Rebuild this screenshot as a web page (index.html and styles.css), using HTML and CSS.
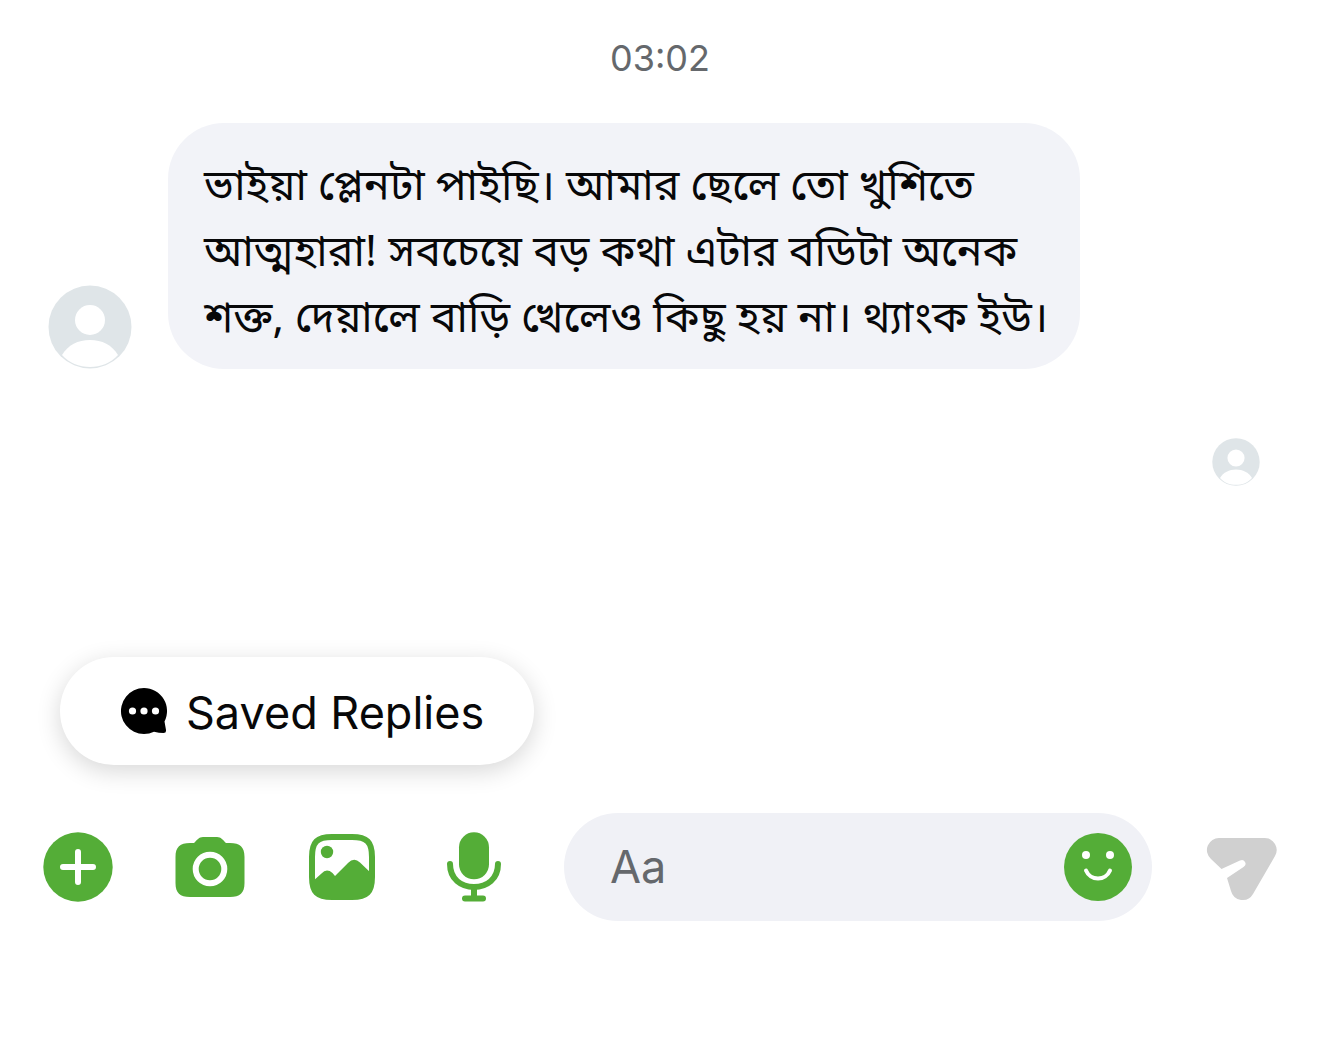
FILE: index.html
```html
<!DOCTYPE html>
<html lang="bn">
<head>
<meta charset="utf-8">
<meta name="viewport" content="width=device-width, initial-scale=1">
<title>Messages</title>
<link rel="stylesheet" href="styles.css">
</head>
<body>
<div class="chat">
  <main class="thread">
    <time class="thread-time" datetime="03:02">03:02</time>
    <article class="message">
      <svg class="avatar" viewBox="0 0 84 84" aria-hidden="true">
        <circle cx="42" cy="42" r="41.5" fill="#dfe5e8"/>
        <circle cx="42" cy="35" r="15" fill="#fff"/>
        <path d="M14 70C20 60 30 55 42 55S64 60 70 70C63 78 53 82 42 82S21 78 14 70Z" fill="#fff"/>
      </svg>
      <div class="bubble">
        <p class="bubble-text">ভাইয়া প্লেনটা পাইছি। আমার ছেলে তো খুশিতে<br>আত্মহারা! সবচেয়ে বড় কথা এটার বডিটা অনেক<br>শক্ত, দেয়ালে বাড়ি খেলেও কিছু হয় না। থ্যাংক ইউ।</p>
      </div>
    </article>
    <div class="receipt">
      <svg class="avatar avatar-small" viewBox="0 0 84 84" aria-hidden="true">
        <circle cx="42" cy="42" r="41.5" fill="#dfe5e8"/>
        <circle cx="42" cy="35" r="15" fill="#fff"/>
        <path d="M14 70C20 60 30 55 42 55S64 60 70 70C63 78 53 82 42 82S21 78 14 70Z" fill="#fff"/>
      </svg>
    </div>
  </main>
  <footer class="footer" lang="en">
    <button class="saved-replies" type="button">
      <svg class="saved-icon" viewBox="0 0 48 48" aria-hidden="true">
        <path d="M24 1A23 23 0 1 0 34 44.700Q39 46 43.500 46Q46.500 46 46 43L44.500 34.500A23 23 0 0 0 24 1Z" fill="#000"/>
        <g fill="#fff"><circle cx="12.500" cy="24" r="3.600"/><circle cx="24" cy="24" r="3.600"/><circle cx="35.500" cy="24" r="3.600"/></g>
      </svg>
      <span class="saved-label">Saved Replies</span>
    </button>
    <form class="composer">
      <div class="tools">
        <button class="icon-button" type="button" aria-label="More">
          <svg viewBox="0 0 72 72"><circle cx="36" cy="36" r="34.700" fill="#54ad37"/><path d="M36 21V51M21 36H51" stroke="#fff" stroke-width="6" stroke-linecap="round"/></svg>
        </button>
        <button class="icon-button" type="button" aria-label="Camera">
          <svg viewBox="0 0 72 72"><path d="M20 12C23 9 25 6 29 6H43C47 6 49 9 52 12H56C66 12 70.500 16 70.500 26V52C70.500 62 66 66 56 66H16C6 66 1.500 62 1.500 52V26C1.500 16 6 12 16 12Z" fill="#54ad37"/><circle cx="36" cy="38" r="14.300" fill="none" stroke="#fff" stroke-width="6"/></svg>
        </button>
        <button class="icon-button" type="button" aria-label="Photo">
          <svg viewBox="0 0 72 72"><path d="M26 6H46C61 6 66 11 66 26V46C66 61 61 66 46 66H26C11 66 6 61 6 46V26C6 11 11 6 26 6Z" fill="none" stroke="#54ad37" stroke-width="6"/><circle cx="21" cy="21" r="6.200" fill="#54ad37"/><path d="M6 51L15.500 42.500Q20.500 37 26.500 42L29 45L42 32Q48 26 54 31.500L66 43V46C66 61 61 66 46 66H26C11 66 6 61 6 51Z" fill="#54ad37"/></svg>
        </button>
        <button class="icon-button" type="button" aria-label="Voice message">
          <svg viewBox="0 0 72 72"><rect x="21" y="1.300" width="30" height="47" rx="15" fill="#54ad37"/><path d="M12 33C12 48 23 56 36 56S60 48 60 33M36 56V67M27 67.500H45" fill="none" stroke="#54ad37" stroke-width="6" stroke-linecap="round"/></svg>
        </button>
      </div>
      <div class="field">
        <input class="field-input" type="text" placeholder="Aa" aria-label="Message">
        <button class="icon-button" type="button" aria-label="Emoji">
          <svg viewBox="0 0 72 72"><circle cx="36" cy="36" r="34" fill="#54ad37"/><circle cx="24" cy="24" r="4" fill="#fff"/><circle cx="48" cy="24" r="4" fill="#fff"/><path d="M24 39.500A13 13 0 0 0 48 39.500" fill="none" stroke="#fff" stroke-width="4" stroke-linecap="round"/></svg>
        </button>
      </div>
      <button class="icon-button" type="submit" aria-label="Send">
        <svg viewBox="0 0 72 72"><path d="M13.500 7H58.500A12 12 0 0 1 69 25L47 63A12 12 0 0 1 25 60L21 47L37.500 36A3.500 3.500 0 0 0 34 29.500L15.500 38L5 28A12 12 0 0 1 13.500 7Z" fill="#d0d0d0"/></svg>
      </button>
    </form>
  </footer>
</div>
</body>
</html>
```
FILE: styles.css
```css
* {
  box-sizing: border-box;
}

body {
  margin: 0;
  background: #fff;
  color: #080809;
  font-family: Inter, "Noto Sans", sans-serif;
}

button,
input {
  border: 0;
  padding: 0;
  background: none;
  color: inherit;
  font: inherit;
}

svg {
  display: block;
}

.chat {
  display: flex;
  flex-direction: column;
  min-height: 100vh;
}

.thread {
  display: flex;
  flex: 1;
  flex-direction: column;
  padding: 34px 60px 0 48px;
}

.thread-time {
  align-self: center;
  padding-left: 12px;
  color: #65686c;
  font-size: 36px;
  line-height: 48px;
}

.message {
  display: flex;
  align-items: flex-end;
  gap: 36px;
  margin-top: 41px;
}

.avatar {
  flex: none;
  width: 84px;
  height: 84px;
}

.avatar-small {
  width: 48px;
  height: 48px;
}

.bubble {
  padding: 34px 32px 14px 36px;
  border-radius: 56px;
  background: #f2f3f8;
}

.bubble-text {
  margin: 0;
  font-family: "Noto Sans Bengali", "Noto Sans", sans-serif;
  font-size: 43px;
  line-height: 66px;
  white-space: nowrap;
}

.receipt {
  display: flex;
  justify-content: flex-end;
  margin-top: 69px;
}

.footer {
  padding: 0 42px 126px;
}

.saved-replies {
  display: flex;
  align-items: center;
  gap: 18px;
  height: 108px;
  margin: 0 18px 48px;
  padding: 0 50px 0 60px;
  border-radius: 54px;
  background: #fff;
  box-shadow: 0 6px 24px rgb(0 0 0 / 16%);
  font-size: 45px;
  line-height: 60px;
}

.saved-label {
  padding-top: 3px;
}

.saved-icon {
  width: 48px;
  height: 48px;
}

.composer {
  display: flex;
  align-items: center;
  gap: 54px;
}

.tools {
  display: flex;
  gap: 60px;
}

.icon-button {
  flex: none;
  width: 72px;
  height: 72px;
}

.field {
  display: flex;
  flex: 1;
  align-items: center;
  min-width: 0;
  height: 108px;
  padding: 0 18px 0 46px;
  border-radius: 54px;
  background: #f0f1f6;
}

.field-input {
  flex: 1;
  min-width: 0;
  outline: none;
  font-size: 45px;
  line-height: 60px;
}

.field-input::placeholder {
  color: #65686c;
  opacity: 1;
}
```
